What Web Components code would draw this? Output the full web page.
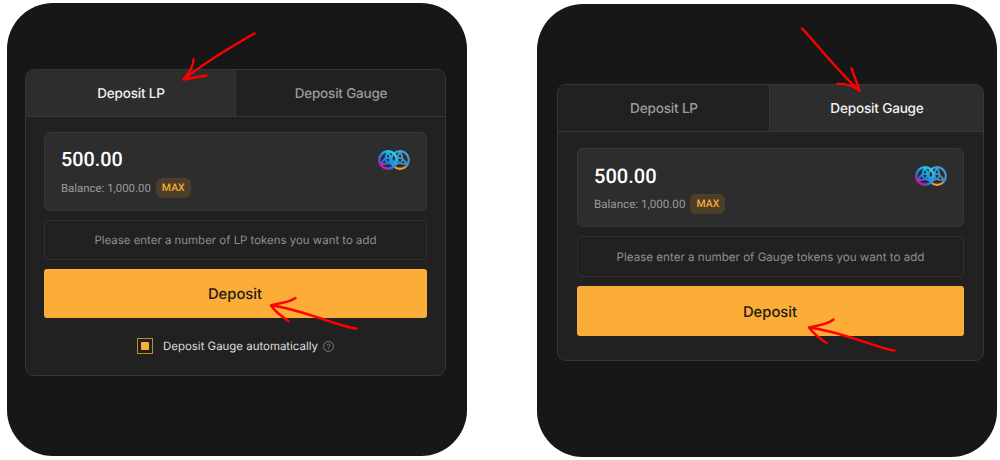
<!DOCTYPE html>
<html lang="en">
<head>
<meta charset="utf-8">
<title>Deposit</title>
<style>
body{margin:0;background:#fff;width:1000px;height:460px;overflow:hidden;font-family:Inter,"Liberation Sans",sans-serif;text-rendering:geometricPrecision}
</style>
</head>
<body>
<deposit-board>
  <deposit-stage class="lp">
    <deposit-card active="lp">
      <token-input amount="500.00" balance="1,000.00"></token-input>
      <hint-box>Please enter a number of LP tokens you want to add</hint-box>
      <action-button>Deposit</action-button>
      <auto-check>Deposit Gauge automatically</auto-check>
    </deposit-card>
  </deposit-stage>
  <deposit-stage class="gauge">
    <deposit-card active="gauge">
      <token-input amount="500.00" balance="1,000.00"></token-input>
      <hint-box>Please enter a number of Gauge tokens you want to add</hint-box>
      <action-button>Deposit</action-button>
    </deposit-card>
  </deposit-stage>
</deposit-board>
<script>
const define = (name, html, setup) => customElements.define(name, class extends HTMLElement {
  constructor() {
    super();
    this.attachShadow({ mode: 'open' }).innerHTML = html;
  }
  connectedCallback() { if (setup) setup(this, this.shadowRoot); }
});

define('deposit-board', `
<style>
:host{display:flex;position:relative;box-sizing:border-box;width:1000px;height:460px;padding:3px 3px 0 7px;gap:70px}
::slotted(.gauge){margin-top:1px;--top:80px;--side:20px;--right:13px;--pad:16px 19px 24px;--msg:41px;--btn:50px;--small:11.6px;--tabsize:13.6px;--balsize:11.6px;--amtsize:20.1px;--split:211px}
svg{position:absolute;left:0;top:0;pointer-events:none}
</style>
<slot></slot>
<svg width="1000" height="460" fill="none" stroke="#fe0000" stroke-width="2.4" stroke-linecap="round" stroke-linejoin="round">
  <path d="M254.5 33.5C236 44 207 61 183.500 79.500M193.500 59.500C193.500 67 189 73 183.500 79.500C191 78.500 199 76.500 206.500 75.500"/>
  <path d="M356.500 328.500C344 328.500 300 308.500 271 305.500M295.500 298C288 303 279 303 271 305.500C275 311.500 281 316 288.500 321"/>
  <path d="M802 28.500C806 31 838 72 859.500 90.500M851.500 68.500C854 76 857 82 859.500 90.500C850 84 844 83.500 837.500 84"/>
  <path d="M894.500 350.500C884 350.500 844 332 809 327.500M833.500 319.500C826 325 817 325.500 809 327.500C813 333 819 338 826.500 343"/>
</svg>`);

define('deposit-stage', `
<style>
:host{display:block;box-sizing:border-box;width:460px;height:453px;flex:none;border-radius:46px;background:#171717;padding:var(--top,66px) var(--right,21px) 0 var(--side,18px)}
</style><slot></slot>`);

define('deposit-card', `
<style>
:host{display:block;border:1px solid #363636;border-radius:9px;background:#212121;overflow:hidden}
nav{display:grid;grid-template-columns:var(--split,209px) 1fr;height:46px;border-bottom:1px solid #363636}
.tab{display:flex;align-items:center;justify-content:center;box-sizing:border-box;padding:1px 0 0 1px;font-size:var(--tabsize,13.5px);letter-spacing:-.2px;font-weight:450;color:#9b9b9b}
.tab+.tab{border-left:1px solid #363636}
.on{background:#2d2d2d;color:#f2f2f2}
main{display:flex;flex-direction:column;gap:9px;padding:var(--pad,15px 18px 21px)}
</style>
<nav><div class="tab" data-k="lp">Deposit LP</div><div class="tab" data-k="gauge">Deposit Gauge</div></nav>
<main><slot></slot></main>`, (el, root) => {
  root.querySelector(`[data-k="${el.getAttribute('active')}"]`).classList.add('on');
});

define('pool-logo', `
<style>:host{display:block;width:32px;height:20px}svg{display:block}</style>
<svg width="32" height="20" viewBox="0 0 32 20" fill="none">
  <defs>
    <linearGradient id="a" x1="3" y1="18" x2="16" y2="3" gradientUnits="userSpaceOnUse"><stop stop-color="#e5009d"/><stop offset=".12" stop-color="#c01cb4"/><stop offset=".36" stop-color="#1f78f0"/><stop offset="1" stop-color="#14d8ee"/></linearGradient>
    <linearGradient id="b" x1="22" y1="20" x2="23" y2="2" gradientUnits="userSpaceOnUse"><stop stop-color="#ffa51d"/><stop offset=".15" stop-color="#d99a42"/><stop offset=".32" stop-color="#408bc8"/><stop offset="1" stop-color="#459edb"/></linearGradient>
  </defs>
  <g stroke="url(#b)"><circle cx="22" cy="10" r="8.800" stroke-width="2.300"/><path stroke-width="1.700" d="M22 2Q29.500 14 15 14.300Q21 1.500 29 14.300Q14.500 14 22 2"/></g>
  <g stroke="url(#a)"><circle cx="10" cy="10" r="8.800" stroke-width="2.400"/><path stroke-width="1.900" d="M10 2Q17.500 14 3 14.300Q9 1.500 17 14.300Q2.500 14 10 2"/></g>
</svg>`);

define('token-input', `
<style>
:host{display:flex;justify-content:space-between;box-sizing:border-box;height:79px;border:1px solid #383838;border-radius:6px;background:#2d2d2d;padding:16px 16px 0}
.amt{font:500 var(--amtsize,19.8px)/22px Roboto,sans-serif;color:#fff}
.row{display:flex;align-items:center;gap:5px;margin-top:7px;font:400 var(--balsize,11.4px)/20px Roboto,sans-serif;color:#9b9b9b}
.max{box-sizing:border-box;width:35px;height:20px;border-radius:6px;background:#4d3e2a;color:#f6a934;font:500 10.5px/20px Roboto,sans-serif;text-align:center}
pool-logo{margin-top:1px}
</style>
<div><div class="amt"></div><div class="row"><span class="bal"></span><span class="max">MAX</span></div></div>
<pool-logo></pool-logo>`, (el, root) => {
  root.querySelector('.amt').textContent = el.getAttribute('amount');
  root.querySelector('.bal').textContent = 'Balance: ' + el.getAttribute('balance');
});

define('hint-box', `
<style>
:host{display:flex;align-items:center;justify-content:center;box-sizing:border-box;height:var(--msg,40px);border:1px solid #2f2f2f;border-radius:3px;font-size:var(--small,11.45px);color:#8f8f8f}
</style><span><slot></slot></span>`);

define('action-button', `
<style>
:host{display:flex;align-items:center;justify-content:center;box-sizing:border-box;height:var(--btn,49px);padding:1px 1px 0 0;border-radius:3px;background:#fbad37;color:#1f1c18;font-size:14.8px;font-weight:450}
</style><slot></slot>`);

define('auto-check', `
<style>
:host{display:flex;align-items:center;justify-content:center;height:16px;margin-top:11px;font-size:11.45px;color:#dedede}
.box{box-sizing:border-box;width:16px;height:16px;border:1px solid #c48a31;display:grid;place-items:center;margin-right:10px}
.box::after{content:"";width:8px;height:8px;border-radius:1px;background:#fbad37}
svg{margin-left:5px}
</style>
<span class="box"></span><span><slot></slot></span>
<svg width="11" height="11" viewBox="0 0 11 11" fill="none" stroke="#7b7b7b"><circle cx="5.500" cy="5.500" r="5"/><path d="M4 4.500C4 2.600 7 2.700 7 4.300C7 5.300 5.500 5.300 5.500 6.500M5.500 7.500V8.400"/></svg>`);
</script>
</body>
</html>
